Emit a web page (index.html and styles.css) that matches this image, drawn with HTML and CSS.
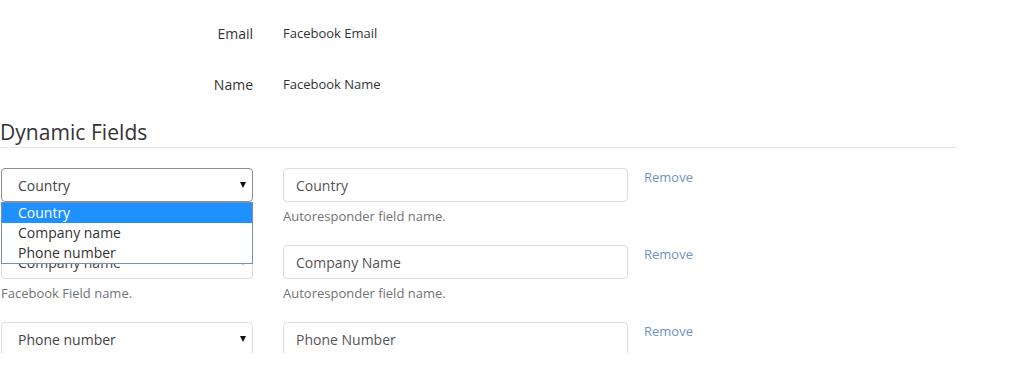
FILE: index.html
```html
<!DOCTYPE html>
<html lang="en">
<head>
  <meta charset="UTF-8" />
  <meta name="viewport" content="width=device-width, initial-scale=1" />
  <title>Field Mapping</title>
  <link rel="stylesheet" href="styles.css">
</head>
<body>

  <div class="page">
    <div class="static-fields">
      <div class="static-row">
        <div class="static-label">Email</div>
        <div class="static-value">Facebook Email</div>
      </div>
      <div class="static-row">
        <div class="static-label">Name</div>
        <div class="static-value">Facebook Name</div>
      </div>
    </div>

    <h3 class="section-title">Dynamic Fields</h3>

    <div class="dynamic-fields">
      <div class="field-row">
        <div class="col-select">
          <div class="select-wrap open">
            <select class="form-control focused">
              <option>Country</option>
              <option>Company name</option>
              <option>Phone number</option>
            </select>
            <ul class="select-list">
              <li class="selected">Country</li>
              <li>Company name</li>
              <li>Phone number</li>
            </ul>
          </div>
        </div>
        <div class="col-input">
          <input class="form-control" type="text" value="Country" />
          <p class="help-text">Autoresponder field name.</p>
        </div>
        <a class="remove-link" href="#">Remove</a>
      </div>

      <div class="field-row">
        <div class="col-select">
          <div class="select-wrap">
            <select class="form-control">
              <option>Country</option>
              <option selected>Company name</option>
              <option>Phone number</option>
            </select>
          </div>
          <p class="help-text">Facebook Field name.</p>
        </div>
        <div class="col-input">
          <input class="form-control" type="text" value="Company Name" />
          <p class="help-text">Autoresponder field name.</p>
        </div>
        <a class="remove-link" href="#">Remove</a>
      </div>

      <div class="field-row">
        <div class="col-select">
          <div class="select-wrap">
            <select class="form-control">
              <option>Country</option>
              <option>Company name</option>
              <option selected>Phone number</option>
            </select>
          </div>
        </div>
        <div class="col-input">
          <input class="form-control" type="text" value="Phone Number" />
        </div>
        <a class="remove-link" href="#">Remove</a>
      </div>
    </div>
  </div>

</body>
</html>
```

FILE: styles.css
```css
body {
  margin: 0;
  padding: 0;
  background: #fff;
  font-family: 'Open Sans', 'Liberation Sans', sans-serif;
  color: #333;
}

.page {
  width: 957px;
  height: 353px;
  overflow: hidden;
}

.static-fields {
  padding-top: 23px;
  display: flex;
  flex-direction: column;
  gap: 31px;
}

.static-row {
  display: flex;
  align-items: center;
  gap: 30px;
  height: 20px;
}

.static-label {
  width: 253px;
  text-align: right;
  font-size: 14px;
  color: #333;
}

.static-value {
  font-size: 13px;
  color: #333;
}

.section-title {
  margin: 27px 0 0 0;
  padding-bottom: 3px;
  border-bottom: 1px solid #e5e5e5;
  font-size: 21px;
  font-weight: 400;
  line-height: 23px;
  color: #333;
  letter-spacing: 0.05px;
}

.dynamic-fields {
  padding-top: 20px;
}

.field-row {
  display: flex;
  align-items: flex-start;
  margin-bottom: 20px;
}

.col-select {
  width: 252px;
  margin-left: 1px;
}

.col-input {
  width: 345px;
  margin-left: 30px;
}

.form-control {
  display: block;
  box-sizing: border-box;
  width: 100%;
  height: 34px;
  margin: 0;
  padding: 0 12px;
  border: 1px solid #dedede;
  border-radius: 4px;
  background: #fff;
  font-family: 'Open Sans', 'Liberation Sans', sans-serif;
  font-size: 14px;
  color: #555;
  outline: none;
}

select.form-control {
  appearance: none;
  -webkit-appearance: none;
  padding-left: 16px;
  color: #444;
}

select.form-control.focused {
  border-color: #8c8c8c;
}

.select-wrap {
  position: relative;
}

.select-wrap::after {
  content: "";
  position: absolute;
  right: 7px;
  top: 14px;
  border-left: 3px solid transparent;
  border-right: 3px solid transparent;
  border-top: 6px solid #111;
}

.select-list {
  position: absolute;
  top: 34px;
  left: 0;
  right: 0;
  z-index: 10;
  margin: 0;
  padding: 0;
  list-style: none;
  background: #fff;
  border: 1px solid #7a8fa8;
}

.select-list li {
  height: 20px;
  line-height: 20px;
  padding-left: 16px;
  font-size: 14px;
  color: #333;
}

.select-list li.selected {
  background: #1e90ff;
  color: #fff;
}

.help-text {
  margin: 5px 0 0 0;
  line-height: 18px;
  font-size: 13px;
  color: #737373;
}

.remove-link {
  margin-left: 16px;
  line-height: 18px;
  font-size: 13px;
  color: #6f93c2;
  text-decoration: none;
}
```
